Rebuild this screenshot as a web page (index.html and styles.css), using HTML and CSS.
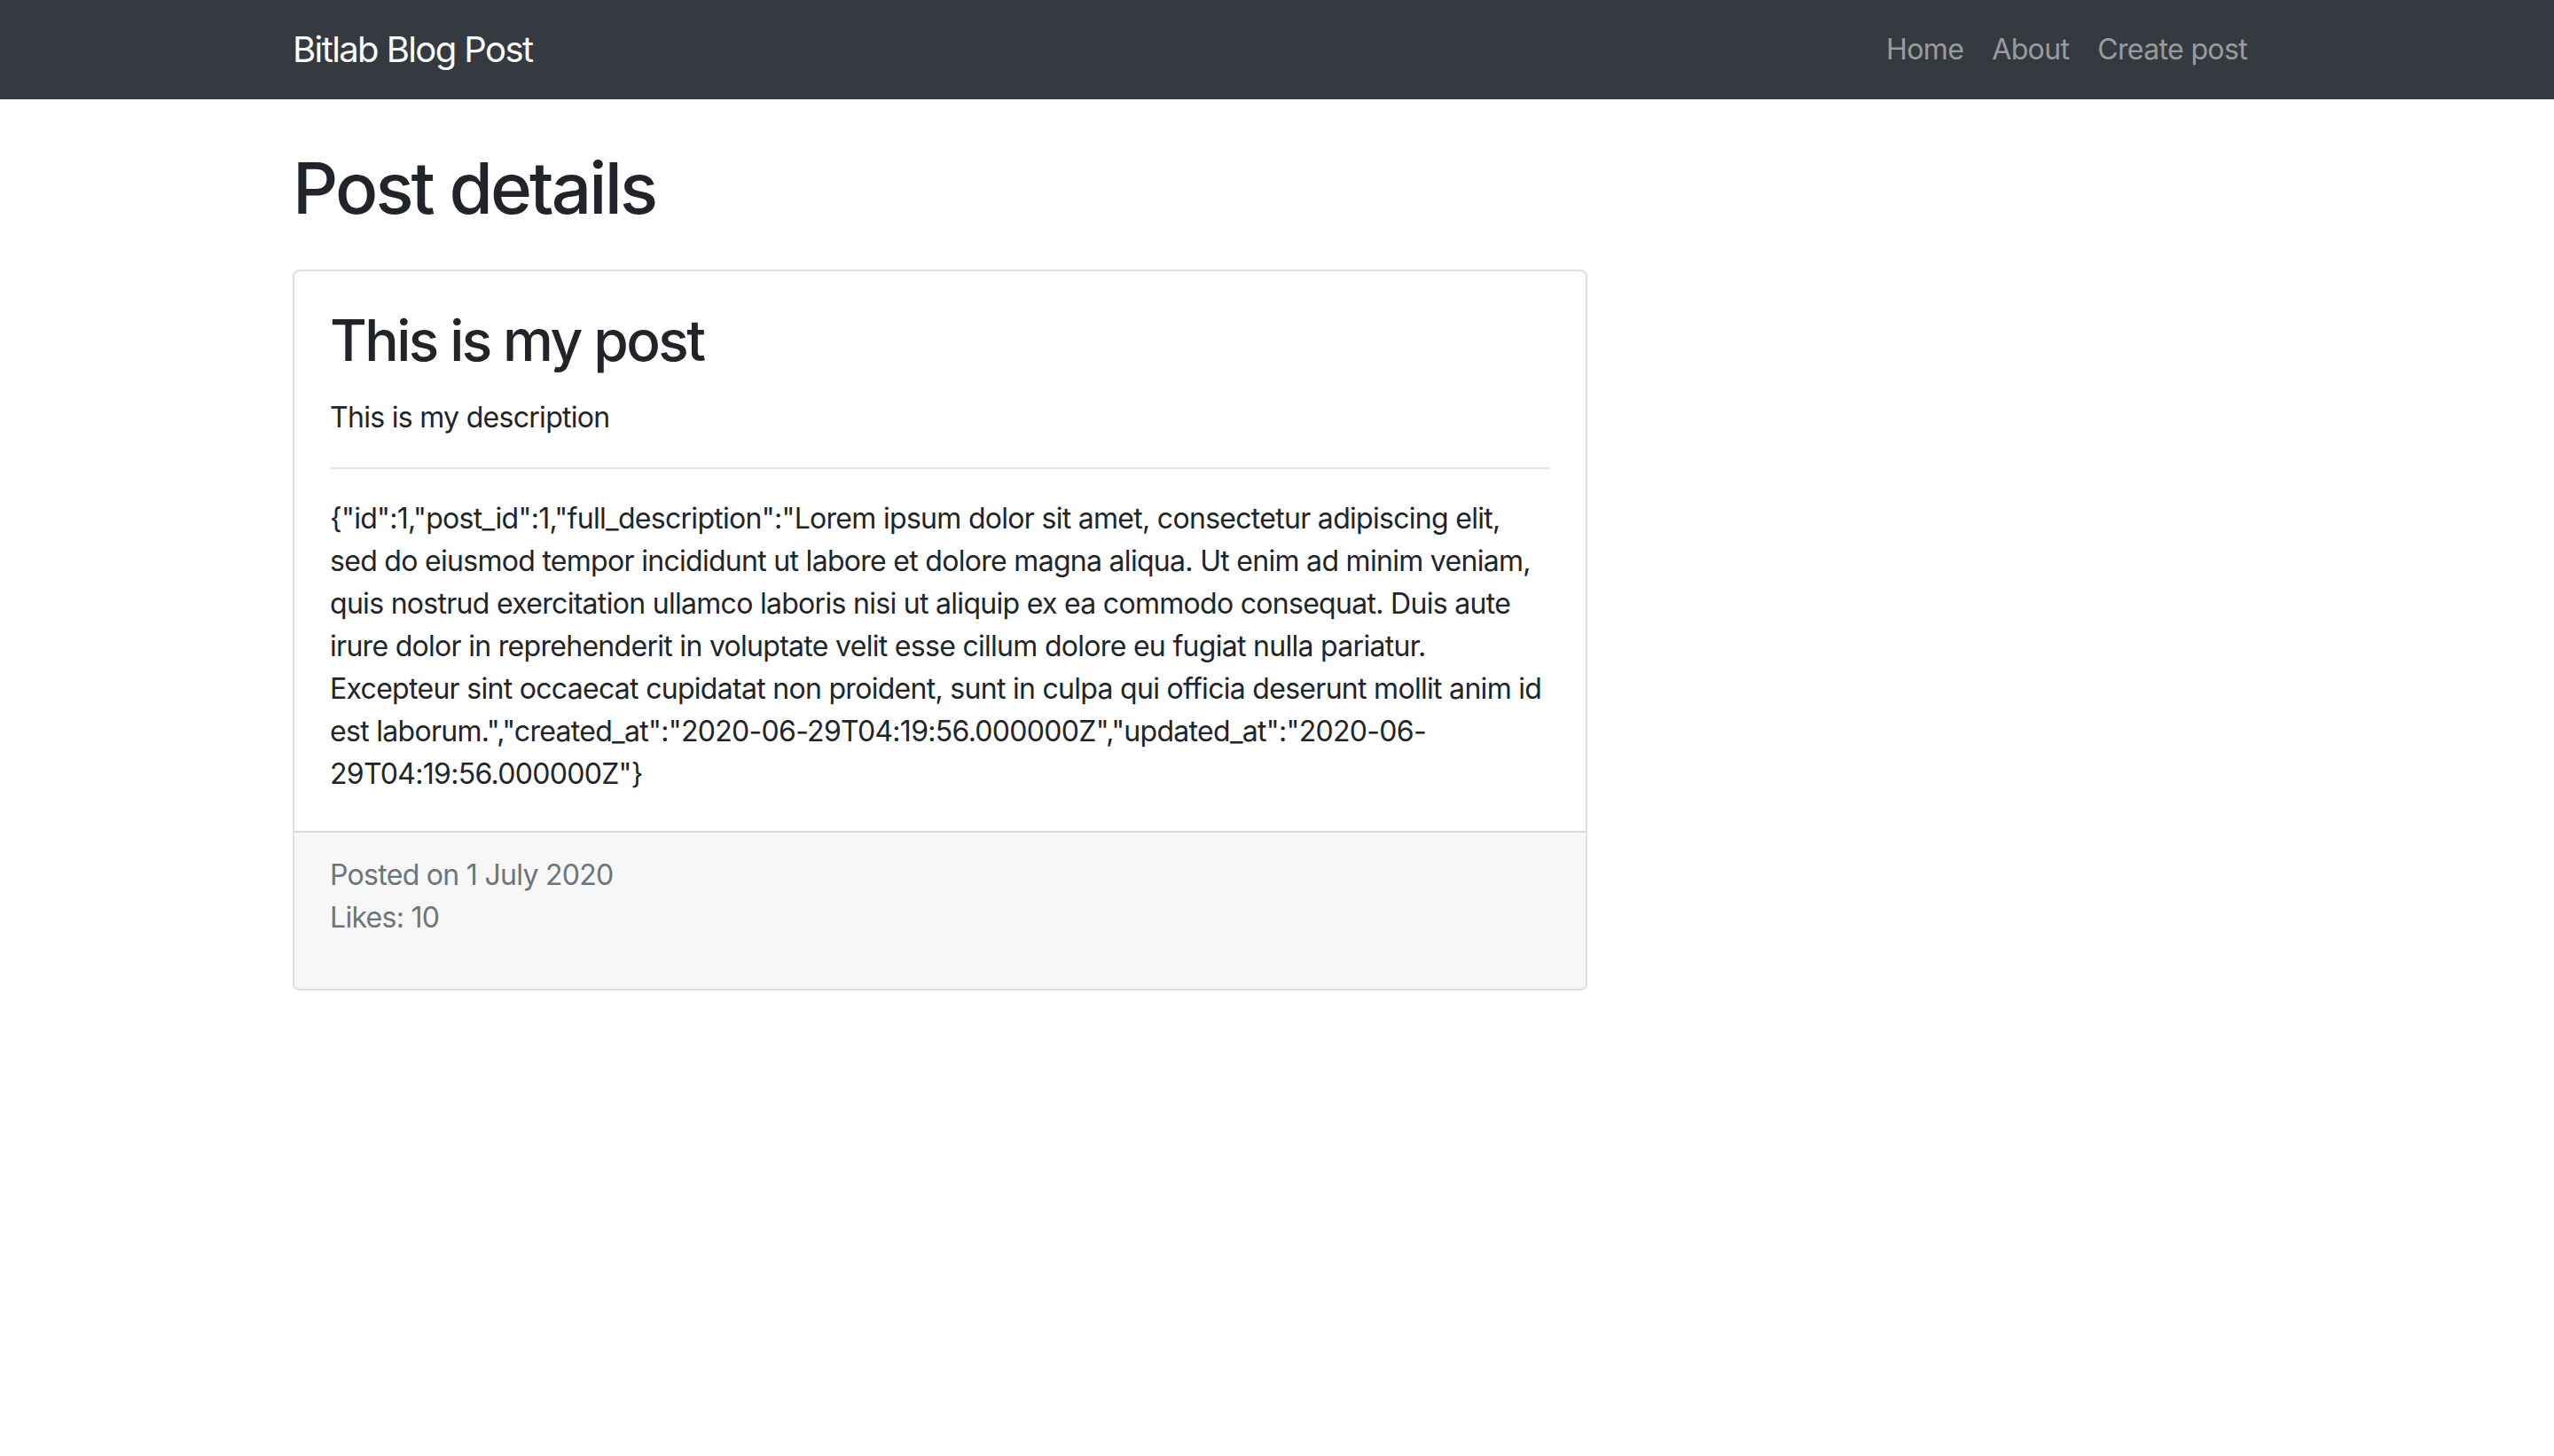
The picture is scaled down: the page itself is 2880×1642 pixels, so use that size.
FILE: index.html
```html
<!DOCTYPE html>
<html lang="en">
<head>
<meta charset="utf-8">
<title>Bitlab Blog Post</title>
<link rel="stylesheet" href="styles.css">
</head>
<body>
<nav class="navbar">
  <div class="container navbar-inner">
    <a class="brand" href="#">Bitlab Blog Post</a>
    <ul class="nav-links">
      <li><a class="nav-link" href="#">Home</a></li>
      <li><a class="nav-link" href="#">About</a></li>
      <li><a class="nav-link" href="#">Create post</a></li>
    </ul>
  </div>
</nav>
<main class="container">
  <h1 class="page-title">Post details</h1>
  <div class="row">
    <div class="col-8">
      <div class="card">
        <div class="card-body">
          <h2 class="card-title">This is my post</h2>
          <p class="card-text">This is my description</p>
          <hr class="divider">
          <p class="card-text">{"id":1,"post_id":1,"full_description":"Lorem ipsum dolor sit amet, consectetur adipiscing elit,<br>sed do eiusmod tempor incididunt ut labore et dolore magna aliqua. Ut enim ad minim veniam,<br>quis nostrud exercitation ullamco laboris nisi ut aliquip ex ea commodo consequat. Duis aute<br>irure dolor in reprehenderit in voluptate velit esse cillum dolore eu fugiat nulla pariatur.<br>Excepteur sint occaecat cupidatat non proident, sunt in culpa qui officia deserunt mollit anim id<br>est laborum.","created_at":"2020-06-29T04:19:56.000000Z","updated_at":"2020-06-<br>29T04:19:56.000000Z"}</p>
        </div>
        <div class="card-footer">
          <p class="footer-text">Posted on 1 July 2020<br>Likes: 10</p>
        </div>
      </div>
    </div>
  </div>
</main>
</body>
</html>
```
FILE: styles.css
```css
* { box-sizing: border-box; }
html, body { margin: 0; padding: 0; }
body {
  font-family: Inter, "Liberation Sans", sans-serif;
  font-size: 32px;
  line-height: 1.5;
  color: #212529;
  background: #fff;
  letter-spacing: -0.022em;
}
a { text-decoration: none; }
.container {
  width: 100%;
  max-width: 2280px;
  margin: 0 auto;
  padding: 0 30px;
}
.navbar {
  background: #343a40;
  padding: 16px 0;
}
.navbar-inner {
  display: flex;
  align-items: center;
  justify-content: space-between;
}
.brand {
  color: #fff;
  font-size: 40px;
  line-height: 60px;
  padding: 10px 0;
  margin-right: 32px;
  white-space: nowrap;
  letter-spacing: -0.04em;
}
.nav-links {
  display: flex;
  list-style: none;
  margin: 0;
  padding: 0;
}
.nav-link {
  display: block;
  padding: 16px;
  color: rgba(255,255,255,.5);
  font-size: 32px;
  line-height: 48px;
  letter-spacing: -0.02em;
}
.page-title {
  font-size: 80px;
  font-weight: 500;
  line-height: 1.2;
  margin: 52px 0 44px;
  letter-spacing: -0.036em;
}
.row {
  display: flex;
  margin: 0 -30px;
}
.col-8 {
  flex: 0 0 66.666667%;
  max-width: 66.666667%;
  padding: 0 30px;
}
.card {
  display: flex;
  flex-direction: column;
  border: 2px solid rgba(0,0,0,.125);
  border-radius: 8px;
  background: #fff;
  overflow: hidden;
}
.card-body {
  padding: 40px;
}
.card-title {
  font-size: 64px;
  font-weight: 500;
  line-height: 1.2;
  margin: 0 0 24px;
  letter-spacing: -0.04em;
}
.card-text {
  margin: 0 0 32px;
}
.card-text:last-child { margin-bottom: 0; }
.divider {
  margin: 32px 0;
  border: 0;
  border-top: 2px solid rgba(0,0,0,.1);
  height: 0;
}
.card-footer {
  padding: 24px 40px;
  background: rgba(0,0,0,.03);
  border-top: 2px solid rgba(0,0,0,.125);
  color: #6c757d;
}
.footer-text {
  margin: 0 0 32px;
}
```
